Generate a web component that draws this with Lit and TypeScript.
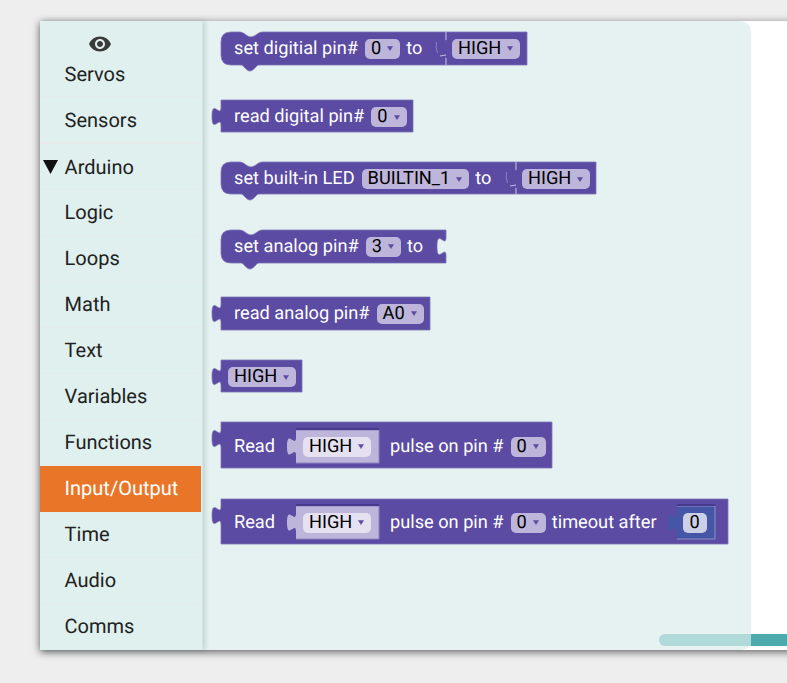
import { LitElement, html, css } from 'lit'
import { customElement } from 'lit/decorators.js'

type Field =
  | { kind: 'text'; value: string; left?: number }
  | { kind: 'drop'; value: string; left?: number }
  | { kind: 'socket'; value: string; color: 'light' | 'blue'; left: number; width: number }

interface Block {
  shape: 'stack' | 'output'
  top: number
  width: number
  height: number
  fields: Field[]
  notch?: boolean
  pad?: number
  dropShift?: number
  attached?: { width: number; value: string }
}

const CATEGORIES = ['Servos', 'Sensors', 'Arduino', 'Logic', 'Loops', 'Math', 'Text', 'Variables', 'Functions', 'Input/Output', 'Time', 'Audio', 'Comms']

const BLOCKS: Block[] = [
  {
    shape: 'stack', top: 11, width: 225, height: 33, notch: true,
    fields: [{ kind: 'text', value: 'set digitial pin#' }, { kind: 'drop', value: '0', left: 7 }, { kind: 'text', value: 'to', left: 6 }],
    attached: { width: 81, value: 'HIGH' },
  },
  {
    shape: 'output', top: 35, width: 192, height: 32, dropShift: 2,
    fields: [{ kind: 'text', value: 'read digital pin#' }, { kind: 'drop', value: '0', left: 7 }],
  },
  {
    shape: 'stack', top: 30, width: 295, height: 32, notch: true, dropShift: 2,
    fields: [{ kind: 'text', value: 'set built-in LED' }, { kind: 'drop', value: 'BUILTIN_1', left: 7 }, { kind: 'text', value: 'to', left: 6 }],
    attached: { width: 80, value: 'HIGH' },
  },
  {
    shape: 'stack', top: 36, width: 225, height: 33, notch: true,
    fields: [{ kind: 'text', value: 'set analog pin#' }, { kind: 'drop', value: '3', left: 7 }, { kind: 'text', value: 'to', left: 6 }],
  },
  {
    shape: 'output', top: 34, width: 209, height: 33,
    fields: [{ kind: 'text', value: 'read analog pin#' }, { kind: 'drop', value: 'A0', left: 7 }],
  },
  {
    shape: 'output', top: 30, width: 81, height: 32, dropShift: 2,
    fields: [{ kind: 'drop', value: 'HIGH', left: -6 }],
  },
  {
    shape: 'output', top: 30, width: 331, height: 46, pad: 3,
    fields: [
      { kind: 'text', value: 'Read' },
      { kind: 'socket', value: 'HIGH', color: 'light', left: 21, width: 83 },
      { kind: 'text', value: 'pulse on pin #', left: 11 },
      { kind: 'drop', value: '0', left: 7 },
    ],
  },
  {
    shape: 'output', top: 31, width: 507, height: 45, pad: 2,
    fields: [
      { kind: 'text', value: 'Read' },
      { kind: 'socket', value: 'HIGH', color: 'light', left: 21, width: 83 },
      { kind: 'text', value: 'pulse on pin #', left: 11 },
      { kind: 'drop', value: '0', left: 7 },
      { kind: 'text', value: 'timeout after', left: 6 },
      { kind: 'socket', value: '0', color: 'blue', left: 20, width: 38 },
    ],
  },
]

const TAB_DOWN = 'c 0,12 -9,-9 -9,9.5 s 9,-2.5 9,9.5'
const TAB_UP = 'c 0,-12 -9,9 -9,-9.5 s 9,2.5 9,-9.5'

function stackPath(w: number, h: number, notch: boolean) {
  const right = notch ? `H ${w} V 7 ${TAB_DOWN} V ${h}` : `H ${w} V ${h}`
  return `M 10,0 H 19 C 23,0 26,5 30,5 C 34,5 37,0 41,0 ${right} H 38 C 35,${h} 33,${h + 6} 29,${h + 6} C 25,${h + 6} 23,${h} 20,${h} H 10 Q 0,${h} 0,${h - 10} V 10 Q 0,0 10,0 Z`
}

function outputPath(w: number, h: number) {
  return `M 0,0 H ${w} V ${h} H 0 V 26 ${TAB_UP} Z`
}

@customElement('app-root')
export class AppRoot extends LitElement {
  static styles = css`
    :host {
      display: block;
      font-family: Roboto, 'Liberation Sans', sans-serif;
      text-rendering: geometricPrecision;
    }
    .page {
      width: 787px;
      height: 683px;
      box-sizing: border-box;
      padding: 21px 0 0 40px;
      background: #eeeeee;
      overflow: hidden;
    }
    .card {
      position: relative;
      display: flex;
      width: 800px;
      height: 629px;
      background: #fff;
      box-shadow: 0 2px 8px rgba(0, 0, 0, 0.6);
    }
    .sidebar {
      position: relative;
      z-index: 1;
      width: 163px;
      height: 100%;
      box-sizing: border-box;
      padding-right: 1px;
      background: #dff0ee;
      border-right: 1px solid #d2e6e6;
      box-shadow: 2px 0 5px rgba(0, 60, 60, 0.18);
      flex: none;
    }
    .eye {
      padding: 11px 0 0 48px;
      height: 19px;
    }
    .eye svg {
      display: block;
    }
    .item {
      display: flex;
      align-items: center;
      height: 45px;
      padding-left: 24.6px;
      font-size: 20px;
      color: #222;
      border-bottom: 1px solid #e6ebe9;
    }
    .item.open ~ .item {
      height: 43px;
      padding-bottom: 2px;
    }
    .item:last-child {
      border-bottom: none;
    }
    .item.thick {
      border-bottom-width: 2px;
    }
    .item.open {
      padding-left: 3px;
      gap: 6.6px;
    }
    .item.selected {
      background: #e97528;
      color: #fff;
      border-bottom-color: transparent;
    }
    .flyout {
      width: 548px;
      height: 100%;
      box-sizing: border-box;
      padding: 0 0 0 18px;
      background: #e6f2f1;
      border-radius: 0 10px 10px 0;
      flex: none;
      overflow: hidden;
    }
    .block {
      position: relative;
      display: flex;
      align-items: center;
      box-sizing: border-box;
      padding-left: 13px;
      color: #fff;
      font-size: 18.2px;
      white-space: nowrap;
    }
    .row {
      display: flex;
    }
    .shape {
      position: absolute;
      left: 0;
      top: 0;
      overflow: visible;
    }
    .block > span,
    .block > div {
      position: relative;
    }
    .drop {
      display: flex;
      align-items: center;
      flex: none;
      gap: 6px;
      height: 20px;
      padding: 0 7px 0 6px;
      background: #bdb5da;
      border-radius: 5px;
      color: #000;
      font-size: 18.2px;
      line-height: 20px;
    }
    .drop svg {
      flex: none;
    }
    .socket {
      display: flex;
      align-items: center;
      flex: none;
      box-sizing: border-box;
      height: 33px;
      padding-left: 7px;
    }
    .socket .drop {
      position: relative;
    }
    .socket.light .drop {
      background: #e5e1f1;
    }
    .socket.blue {
      padding-left: 6px;
    }
    .socket.blue .drop {
      background: #ccd0e6;
      padding: 0 7px;
    }
    .scrollbar {
      position: absolute;
      z-index: 2;
      left: 619px;
      bottom: 4px;
      width: 181px;
      height: 12px;
      border-radius: 6px;
      background: linear-gradient(90deg, #b0d9d9 0 92px, #4eabad 92px);
    }
  `

  private renderDrop(value: string, left = 0, shift = 0) {
    const style = `${left ? `margin-left:${left}px;` : ''}${shift ? `margin-top:${shift}px;` : ''}`
    return html`<div class="drop" style=${style}>
      <span>${value}</span>
      <svg width="6" height="5" viewBox="0 0 6 5"><path d="M0.4 0.4 H5.6 L3 4.6 Z" fill="#5b4ba3" stroke="#5b4ba3" stroke-width="0.5" stroke-linejoin="round"></path></svg>
    </div>`
  }

  private renderSocket(f: Extract<Field, { kind: 'socket' }>) {
    const light = f.color === 'light'
    const fill = light ? '#bdb5da' : '#4556a6'
    const edge = light ? '#8f84c0' : '#8b92c8'
    return html`<div class="socket ${f.color}" style="margin-left:${f.left}px;width:${f.width}px">
      <svg class="shape" width=${f.width} height="33">
        <path d="M ${f.width},33 H 0 V 26 ${TAB_UP} V 0 H ${f.width} Z" fill=${fill}></path>
        <path d="M 0,0 H ${f.width} V 33 H 0" fill="none" stroke=${edge} stroke-width="1"></path>
        <path d="M 0,-1 H ${f.width}" stroke="#473a8c" stroke-width="2"></path>
      </svg>
      ${light
        ? this.renderDrop(f.value)
        : html`<div class="drop"><span>${f.value}</span></div>`}
    </div>`
  }

  private renderField(f: Field, shift = 0) {
    if (f.kind === 'text') return html`<span style=${f.left ? `margin-left:${f.left}px` : ''}>${f.value}</span>`
    if (f.kind === 'drop') return this.renderDrop(f.value, f.left, shift)
    return this.renderSocket(f)
  }

  private renderBlock(b: Block) {
    // an attached block fills the notch, so the parent is drawn without one
    const notch = !!b.notch && !b.attached
    const d = b.shape === 'stack' ? stackPath(b.width, b.height, notch) : outputPath(b.width, b.height)
    return html`<div class="row" style="margin-top:${b.top}px">
      <div class="block" style="width:${b.width}px;height:${b.height}px;padding-top:${b.pad ?? 0}px">
        <svg class="shape" width=${b.width} height=${b.height}>
          <path d=${d} fill="#5b4ba3" stroke="#7f73b6" stroke-width="0.8"></path>
        </svg>
        ${b.fields.map((f) => this.renderField(f, b.dropShift))}
      </div>
      ${b.attached
        ? html`<div class="block" style="width:${b.attached.width}px;height:${b.height}px;padding-left:6px">
            <svg class="shape" width=${b.attached.width} height=${b.height}>
              <path d=${outputPath(b.attached.width, b.height)} fill="#5b4ba3"></path>
              <path d="M 0,0 H ${b.attached.width} V ${b.height} H 0" fill="none" stroke="#7f73b6" stroke-width="0.8"></path>
              <path d="M 0,0 V 8 M 0,26 V ${b.height} M -6,24 L 0,23" fill="none" stroke="#c5bfe0" stroke-width="1"></path>
              <path d="M -9.5,10 Q -10.5,16 -8.5,21" fill="none" stroke="#8d82bd" stroke-width="1"></path>
            </svg>
            ${this.renderDrop(b.attached.value, 0, b.dropShift)}
          </div>`
        : ''}
    </div>`
  }

  render() {
    return html`<div class="page">
      <div class="card">
        <div class="sidebar">
          <div class="eye">
            <svg width="24" height="24" viewBox="0 0 24 24" fill="#3a3a3a">
              <path d="M12 4.5C7 4.5 2.73 7.61 1 12c1.73 4.39 6 7.5 11 7.5s9.27-3.11 11-7.5c-1.73-4.39-6-7.5-11-7.5zM12 17c-2.76 0-5-2.24-5-5s2.24-5 5-5 5 2.24 5 5-2.24 5-5 5zm0-8c-1.66 0-3 1.34-3 3s1.34 3 3 3 3-1.34 3-3-1.34-3-3-3z"></path>
            </svg>
          </div>
          ${CATEGORIES.map(
            (name) => html`<div
              class="item ${name === 'Sensors' ? 'thick' : ''} ${name === 'Arduino' ? 'open' : ''} ${name === 'Input/Output' ? 'selected' : ''}"
            >
              ${name === 'Arduino'
                ? html`<svg width="15" height="14" viewBox="0 0 15 14"><path d="M0 0 H15 L7.5 14 Z" fill="#111"></path></svg>`
                : ''}
              <span>${name}</span>
            </div>`,
          )}
        </div>
        <div class="flyout">${BLOCKS.map((b) => this.renderBlock(b))}</div>
        <div class="scrollbar"></div>
      </div>
    </div>`
  }
}

declare global {
  interface HTMLElementTagNameMap {
    'app-root': AppRoot
  }
}
